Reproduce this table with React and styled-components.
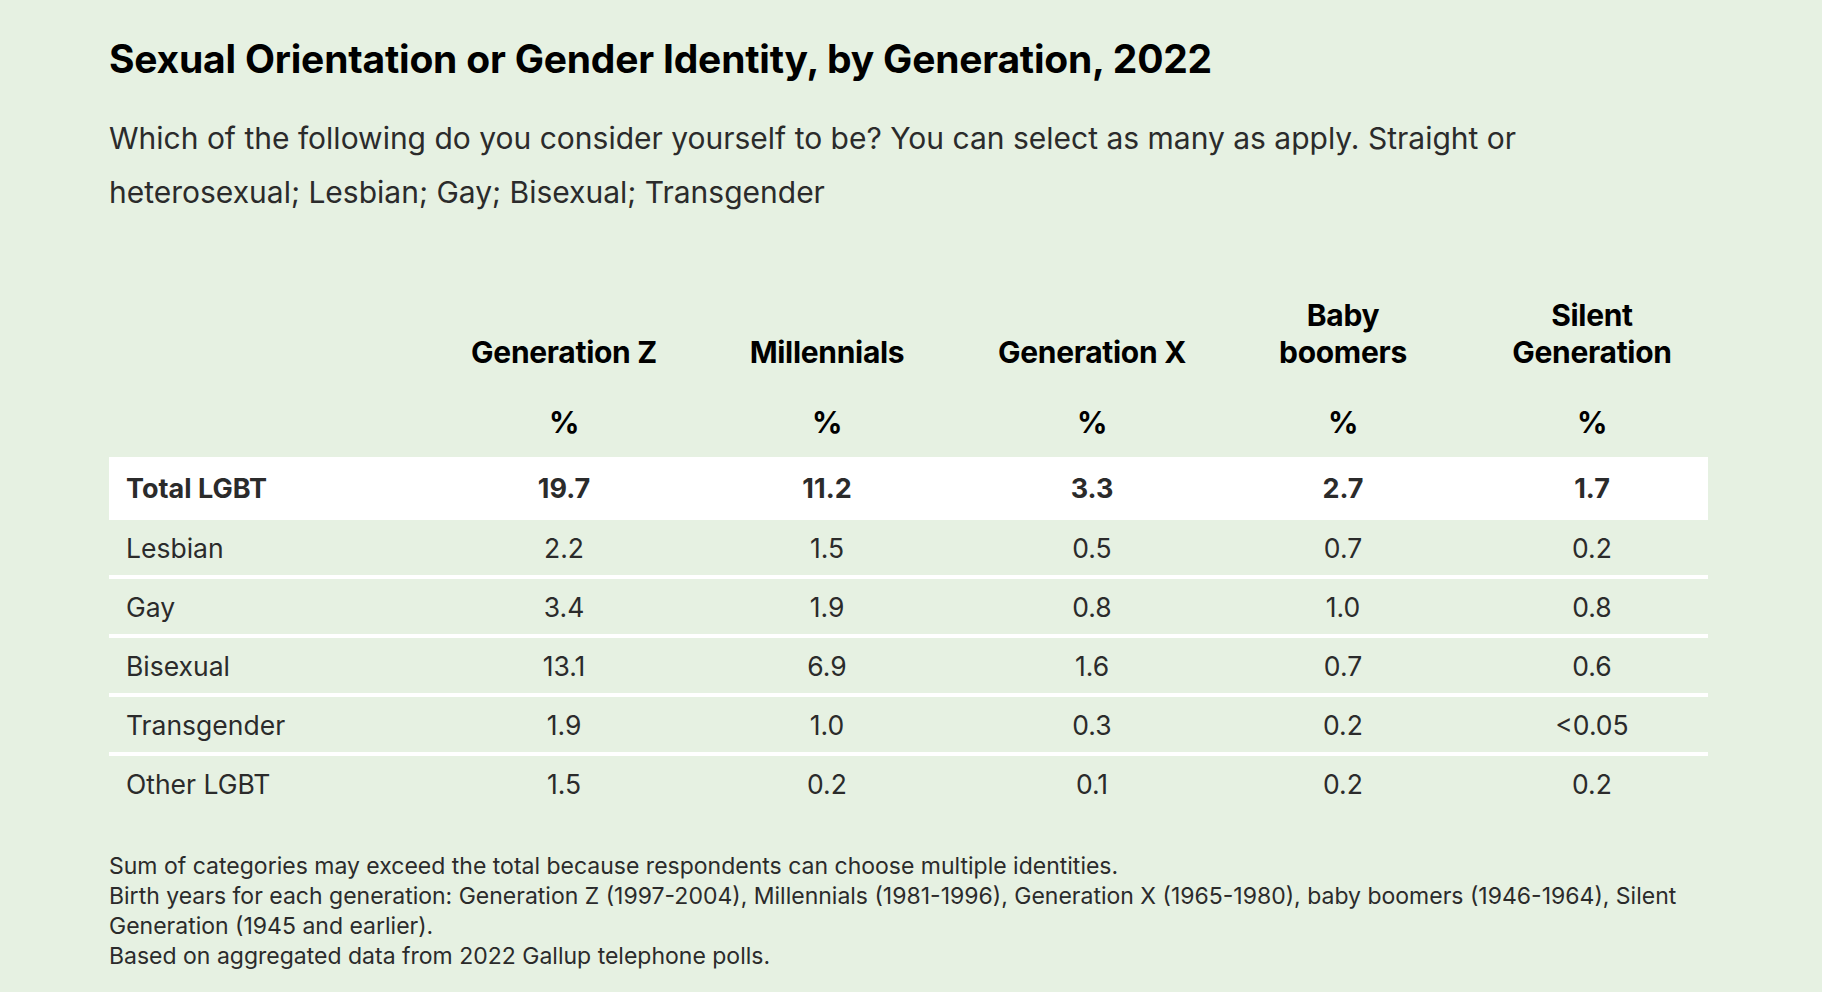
import React from "react";
import styled, { createGlobalStyle } from "styled-components";

const GlobalStyle = createGlobalStyle`
  html, body {
    margin: 0;
    padding: 0;
    background: #e6f1e2;
  }
  body {
    font-family: Inter, "Noto Sans", "Liberation Sans", sans-serif;
    color: #2b2b2b;
  }
`;

const Page = styled.main`
  width: 1599px;
  margin-left: 109px;
  padding-top: 35px;
  padding-bottom: 20px;
`;

const Title = styled.h1`
  margin: 0;
  font-size: 39px;
  line-height: 48px;
  font-weight: 700;
  color: #000;
  letter-spacing: -0.2px;
`;

const Question = styled.p`
  margin: 28px 0 0;
  font-size: 30px;
  line-height: 54px;
  color: #2b2b2b;
`;

const Table = styled.table`
  margin-top: 78px;
  width: 100%;
  table-layout: fixed;
  border-collapse: collapse;
`;

const Col = styled.col`
  width: ${({ w }) => w}px;
`;

const HeadCell = styled.th`
  padding: ${({ last }) => (last ? "17px 8px 16px" : "0 8px 16px")};
  vertical-align: bottom;
  text-align: center;
  font-size: 30px;
  line-height: 37px;
  font-weight: 700;
  color: #000;
  letter-spacing: -0.3px;
`;

const Row = styled.tr`
  background: ${({ total }) => (total ? "#ffffff" : "transparent")};
  border-top: ${({ divided }) => (divided ? "4px solid #ffffff" : "0")};
`;

const LabelCell = styled.td`
  height: ${({ total }) => (total ? "63px" : "55px")};
  padding: 0 0 0 17px;
  vertical-align: middle;
  text-align: left;
  font-size: ${({ total }) => (total ? "27px" : "26.5px")};
  font-weight: ${({ total }) => (total ? 700 : 400)};
  color: #2b2b2b;
`;

const ValueCell = styled.td`
  padding: 0;
  vertical-align: middle;
  text-align: center;
  font-size: ${({ total }) => (total ? "27px" : "26.5px")};
  font-weight: ${({ total }) => (total ? 700 : 400)};
  color: #2b2b2b;
`;

const Notes = styled.div`
  margin-top: 40px;
  font-size: 23px;
  line-height: 30px;
  color: #2b2b2b;
`;

const Note = styled.p`
  margin: 0;
`;

const widths = [339, 232, 294, 236, 266, 232];

const generations = [
  ["Generation Z"],
  ["Millennials"],
  ["Generation X"],
  ["Baby", "boomers"],
  ["Silent", "Generation"],
];

const rows = [
  { label: "Total LGBT", values: ["19.7", "11.2", "3.3", "2.7", "1.7"], total: true },
  { label: "Lesbian", values: ["2.2", "1.5", "0.5", "0.7", "0.2"] },
  { label: "Gay", values: ["3.4", "1.9", "0.8", "1.0", "0.8"] },
  { label: "Bisexual", values: ["13.1", "6.9", "1.6", "0.7", "0.6"] },
  { label: "Transgender", values: ["1.9", "1.0", "0.3", "0.2", "<0.05"] },
  { label: "Other LGBT", values: ["1.5", "0.2", "0.1", "0.2", "0.2"] },
];

export default function App() {
  return (
    <>
      <GlobalStyle />
      <Page>
        <Title>Sexual Orientation or Gender Identity, by Generation, 2022</Title>
        <Question>
          Which of the following do you consider yourself to be? You can select as many as apply.
          Straight or heterosexual; Lesbian; Gay; Bisexual; Transgender
        </Question>

        <Table>
          <colgroup>
            {widths.map((w, i) => (
              <Col key={i} w={w} />
            ))}
          </colgroup>
          <thead>
            <tr>
              <HeadCell />
              {generations.map((g) => (
                <HeadCell key={g.join(" ")}>
                  {g.map((line, i) => (
                    <React.Fragment key={line}>
                      {i > 0 && <br />}
                      {line}
                    </React.Fragment>
                  ))}
                </HeadCell>
              ))}
            </tr>
            <tr>
              <HeadCell last />
              {generations.map((g) => (
                <HeadCell last key={g.join(" ")}>%</HeadCell>
              ))}
            </tr>
          </thead>
          <tbody>
            {rows.map((r, i) => (
              <Row key={r.label} total={r.total} divided={i > 1}>
                <LabelCell total={r.total}>{r.label}</LabelCell>
                {r.values.map((v, j) => (
                  <ValueCell key={j} total={r.total}>{v}</ValueCell>
                ))}
              </Row>
            ))}
          </tbody>
        </Table>

        <Notes>
          <Note>Sum of categories may exceed the total because respondents can choose multiple identities.</Note>
          <Note>
            Birth years for each generation: Generation Z (1997-2004), Millennials (1981-1996), Generation X
            (1965-1980), baby boomers (1946-1964), Silent Generation (1945 and earlier).
          </Note>
          <Note>Based on aggregated data from 2022 Gallup telephone polls.</Note>
        </Notes>
      </Page>
    </>
  );
}
